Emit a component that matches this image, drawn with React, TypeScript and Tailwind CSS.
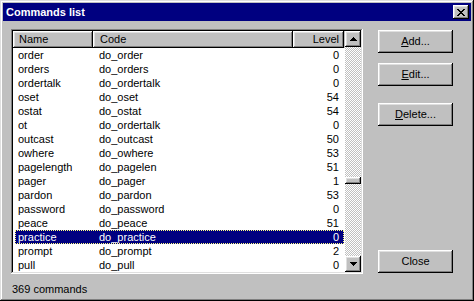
import React from "react";

interface Command {
  name: string;
  code: string;
  level: number;
}

const commands: Command[] = [
  { name: "order", code: "do_order", level: 0 },
  { name: "orders", code: "do_orders", level: 0 },
  { name: "ordertalk", code: "do_ordertalk", level: 0 },
  { name: "oset", code: "do_oset", level: 54 },
  { name: "ostat", code: "do_ostat", level: 54 },
  { name: "ot", code: "do_ordertalk", level: 0 },
  { name: "outcast", code: "do_outcast", level: 50 },
  { name: "owhere", code: "do_owhere", level: 53 },
  { name: "pagelength", code: "do_pagelen", level: 51 },
  { name: "pager", code: "do_pager", level: 1 },
  { name: "pardon", code: "do_pardon", level: 53 },
  { name: "password", code: "do_password", level: 0 },
  { name: "peace", code: "do_peace", level: 51 },
  { name: "practice", code: "do_practice", level: 0 },
  { name: "prompt", code: "do_prompt", level: 2 },
  { name: "pull", code: "do_pull", level: 0 },
];

const raised =
  "shadow-[inset_-1px_-1px_#000,inset_1px_1px_#fff,inset_-2px_-2px_#808080,inset_2px_2px_#dfdfdf]";

function Button({ label, hot }: { label: string; hot?: number }) {
  return (
    <button
      className={`w-[75px] h-[23px] bg-[#c0c0c0] text-black text-[11px] leading-none flex items-center justify-center ${raised}`}
    >
      {hot === undefined ? (
        label
      ) : (
        <span>
          {label.slice(0, hot)}
          <span className="underline">{label[hot]}</span>
          {label.slice(hot + 1)}
        </span>
      )}
    </button>
  );
}

function Arrow({ down }: { down?: boolean }) {
  return (
    <div className={`w-[16px] h-[16px] bg-[#c0c0c0] flex items-center justify-center ${raised}`}>
      <svg width="7" height="4" viewBox="0 0 7 4" shapeRendering="crispEdges">
        {down ? (
          <polygon points="0,0 7,0 3.5,4" fill="#000" />
        ) : (
          <polygon points="3.5,0 7,4 0,4" fill="#000" />
        )}
      </svg>
    </div>
  );
}

export default function App() {
  const selected = "practice";

  return (
    <div className="w-[474px] h-[301px] bg-[#c0c0c0] p-[3px] font-['Liberation_Sans',Arial,sans-serif] text-[11px] text-black shadow-[inset_-1px_-1px_#000,inset_1px_1px_#dfdfdf,inset_-2px_-2px_#808080,inset_2px_2px_#fff] flex flex-col">
      {/* title bar */}
      <div className="h-[18px] bg-[#000080] flex items-center justify-between pl-[3px] pr-[2px]">
        <span className="text-white font-bold text-[11px] leading-none">Commands list</span>
        <div className={`w-[16px] h-[14px] bg-[#c0c0c0] flex items-center justify-center ${raised}`}>
          <svg width="8" height="7" viewBox="0 0 8 7" shapeRendering="crispEdges" fill="#000">
            <rect x="0" y="0" width="2" height="1" />
            <rect x="6" y="0" width="2" height="1" />
            <rect x="1" y="1" width="2" height="1" />
            <rect x="5" y="1" width="2" height="1" />
            <rect x="2" y="2" width="4" height="1" />
            <rect x="3" y="3" width="2" height="1" />
            <rect x="2" y="4" width="4" height="1" />
            <rect x="1" y="5" width="2" height="1" />
            <rect x="5" y="5" width="2" height="1" />
            <rect x="0" y="6" width="2" height="1" />
            <rect x="6" y="6" width="2" height="1" />
          </svg>
        </div>
      </div>

      <div className="flex pl-[8px] pt-[8px]">
        {/* list view */}
        <div className="w-[352px] h-[245px] bg-white p-[2px] flex shadow-[inset_-1px_-1px_#fff,inset_1px_1px_#808080,inset_-2px_-2px_#dfdfdf,inset_2px_2px_#000]">
          <div className="flex-1 flex flex-col">
            <div className="h-[17px] flex bg-[#c0c0c0]">
              <div className={`w-[80px] pl-[6px] flex items-center ${raised}`}>Name</div>
              <div className={`w-[200px] pl-[7px] flex items-center ${raised}`}>Code</div>
              <div className={`w-[51px] pr-[5px] flex items-center justify-end ${raised}`}>Level</div>
            </div>
            <div className="flex-1 pl-[2px]">
              {commands.map((c) => {
                const sel = c.name === selected;
                return (
                  <div
                    key={c.name}
                    className={`h-[14px] w-[329px] flex items-center leading-[14px] ${
                      sel ? "bg-[#000080] text-white outline-1 outline-dotted outline-[#ffff80] -outline-offset-1" : ""
                    }`}
                  >
                    <span className="w-[78px] pl-[3px]">{c.name}</span>
                    <span className="w-[200px] pl-[6px]">{c.code}</span>
                    <span className="w-[51px] pr-[5px] text-right">{c.level}</span>
                  </div>
                );
              })}
            </div>
          </div>
          {/* scrollbar */}
          <div className="w-[16px] flex flex-col bg-[repeating-conic-gradient(#c0c0c0_0%_25%,#fff_0%_50%)] bg-[length:2px_2px]">
            <Arrow />
            <div className="flex-1 flex flex-col">
              <div className="h-[130px]" />
              <div className={`h-[7px] bg-[#c0c0c0] ${raised}`} />
            </div>
            <Arrow down />
          </div>
        </div>

        {/* buttons */}
        <div className="ml-[15px] flex flex-col pt-[1px]">
          <Button label="Add..." hot={0} />
          <div className="h-[10px]" />
          <Button label="Edit..." hot={0} />
          <div className="h-[17px]" />
          <Button label="Delete..." hot={0} />
          <div className="h-[124px]" />
          <Button label="Close" />
        </div>
      </div>

      <div className="pl-[9px] pt-[9px] leading-[12px]">369 commands</div>
    </div>
  );
}
